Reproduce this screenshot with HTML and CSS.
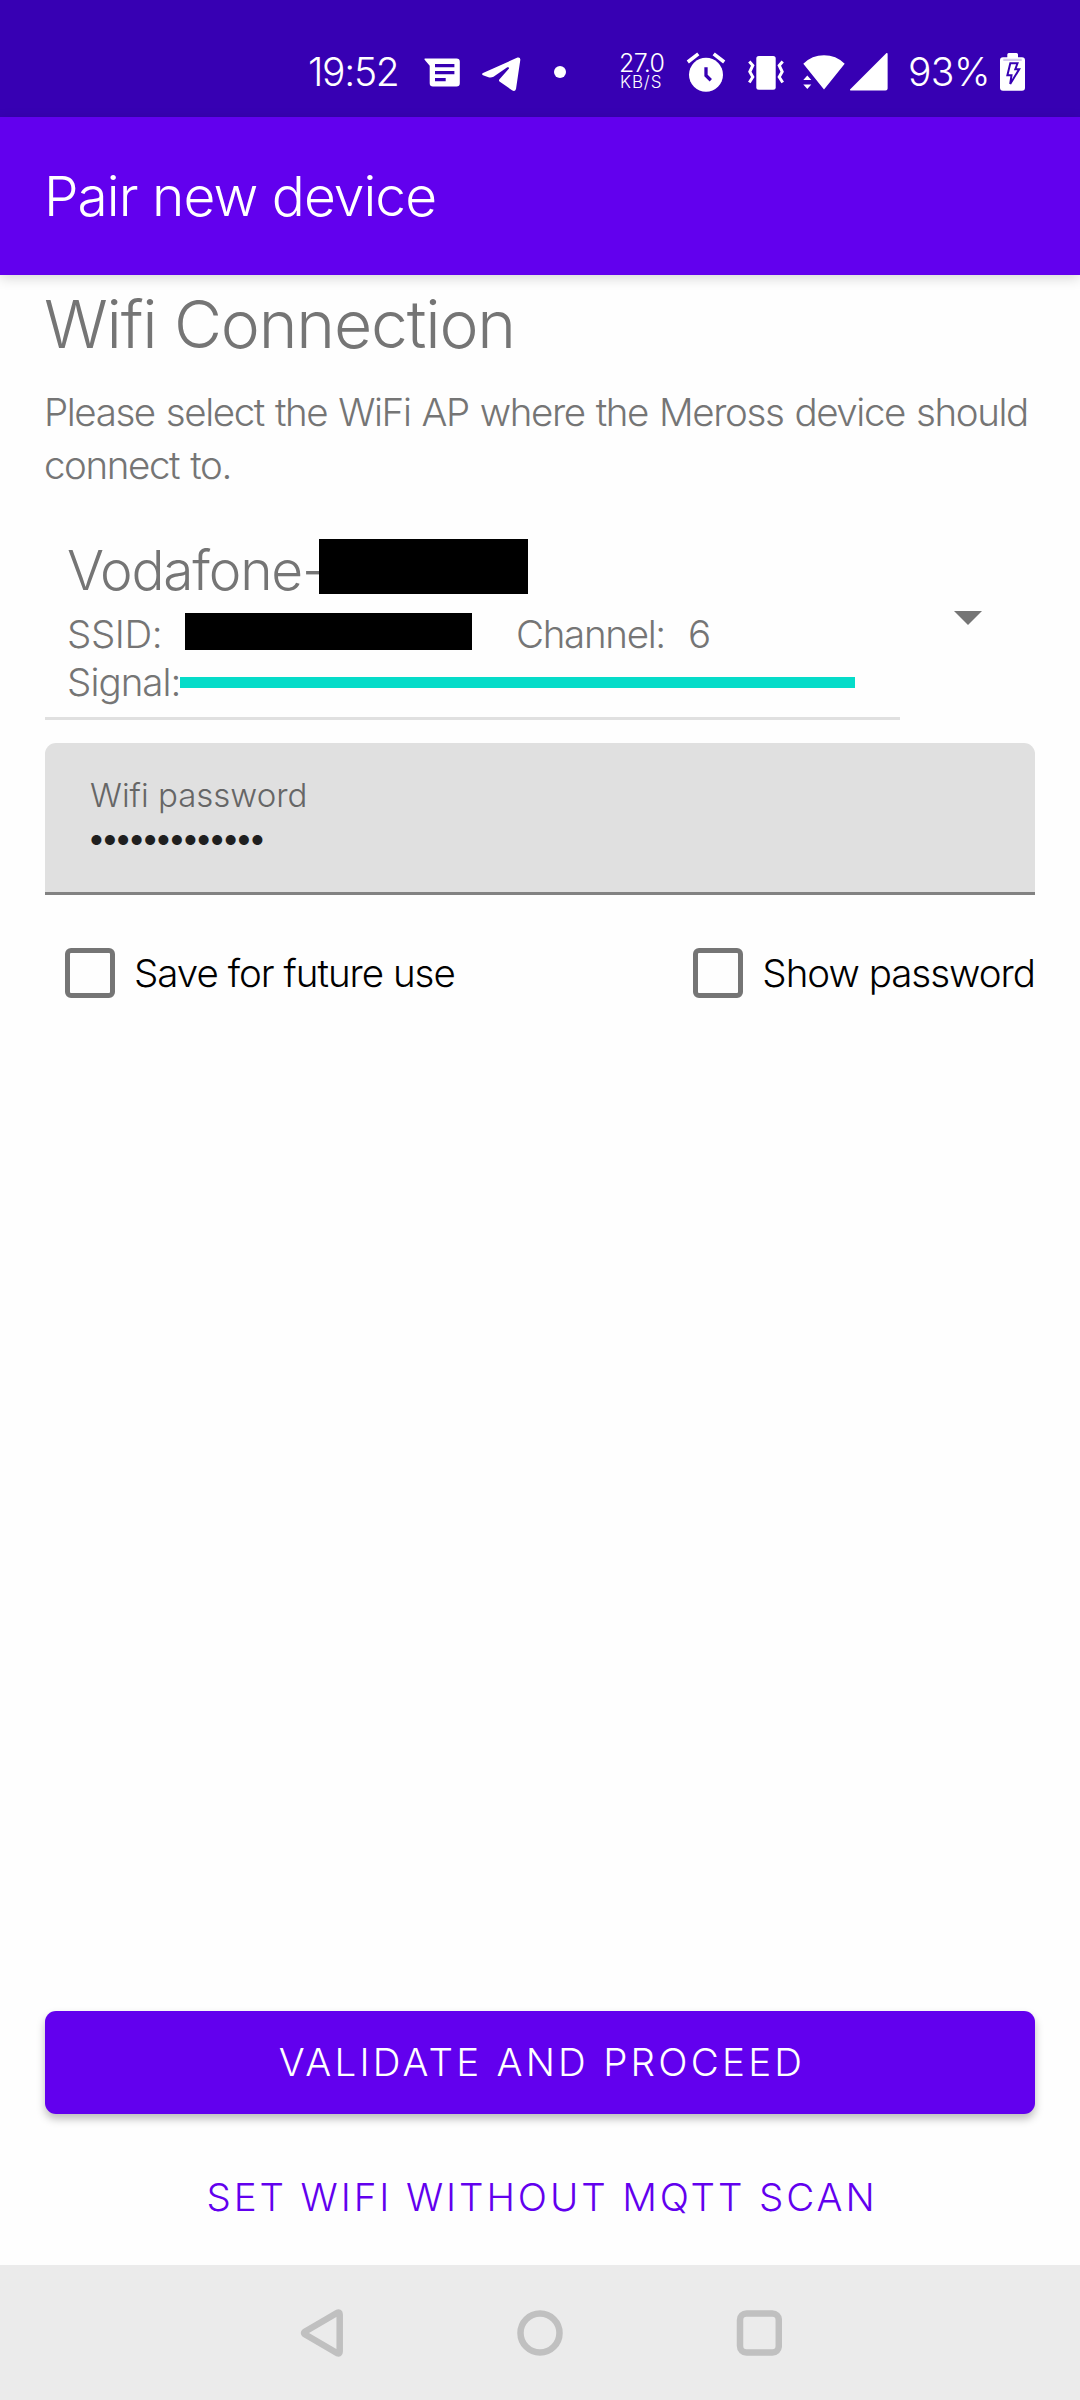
FILE: index.html
```html
<!DOCTYPE html>
<html lang="en">
<head>
    <meta charset="UTF-8">
    <meta name="viewport" content="width=device-width, initial-scale=1.0">
    <title>Pair new device</title>
    <link rel="stylesheet" href="styles.css">
</head>
<body>
    <div class="status-bar">
        <span class="clock">19:52</span>
        <svg class="icon icon-message" width="37" height="40" viewBox="0 0 37 40">
            <path fill="#fff" fill-rule="evenodd" d="M.8 6.5H32.5Q35.8 6.5 35.8 9.8V31.3Q35.8 34.6 32.5 34.6H9Q5.7 34.6 5.7 31.3V13.8L.6 7.8Q.2 6.7.8 6.5zM11 12v3.2h19.4V12zM11 19v3.2h19.4V19zM11 26v3.2h10.7V26z"/>
        </svg>
        <svg class="icon icon-telegram" width="40" height="40" viewBox="0 0 40 40">
            <path fill="#fff" d="M2 21L36.5 5.6Q39.6 5 39.3 8L35 37Q34 40 31 38.2L18.5 29.5Q17.5 28.5 18.5 27.3L28 16.5Q28.3 14.8 26.3 15.3L12.5 24.7Q10 26 7.5 25.2L2 23.3Q.2 22.2 2 21z"/>
        </svg>
        <span class="more-dot"></span>
        <div class="net-speed">
            <span class="speed-value">27.0</span>
            <span class="speed-unit">KB/S</span>
        </div>
        <svg class="icon icon-alarm" width="40" height="40" viewBox="0 0 40 40">
            <circle cx="20" cy="22.7" r="17" fill="#fff"/>
            <path d="M1.8 10L12.3 1.8M27.7 1.8L38.2 10" stroke="#fff" stroke-width="3.6" fill="none"/>
            <path d="M20 15.3V23.5L24.8 28.2" stroke="#3700b3" stroke-width="3.3" fill="none"/>
        </svg>
        <svg class="icon icon-vibrate" width="36" height="40" viewBox="0 0 36 40">
            <rect x="8.3" y="4" width="19.4" height="33.8" rx="2.5" fill="#fff"/>
            <path d="M1.3 9.5L4.8 13.5L1.8 19.8L4.8 25L1.3 30.5M34.7 9.5L31.2 13.5L34.2 19.8L31.2 25L34.7 30.5" stroke="#fff" stroke-width="3" fill="none"/>
        </svg>
        <svg class="icon icon-wifi" width="44" height="40" viewBox="0 0 44 40">
            <path fill="#fff" d="M1.3 11.7Q10 3.3 22 3.3T42.7 11.7L22 37.5zM1.3 28L5.3 23.6L9.3 28zM1.3 32.6h8L5.3 37z"/>
        </svg>
        <svg class="icon icon-signal" width="40" height="40" viewBox="0 0 40 40">
            <path fill="#fff" d="M37.5 1Q38.6.6 38.6 1.8V36.5Q38.6 38.6 36.5 38.6H1.8Q.6 38.6 1 37.5z"/>
        </svg>
        <span class="battery-level">93%</span>
        <svg class="icon icon-battery" width="25" height="40" viewBox="0 0 25 40">
            <path fill="#fff" d="M7.3 5.3V2.5Q7.3 1 8.8 1H16.5Q18 1 18 2.5V5.3H22Q25 5.3 25 8.3V35.7Q25 38.7 22 38.7H3Q0 38.7 0 35.7V8.3Q0 5.3 3 5.3z"/>
            <path fill="#d2c8ee" d="M3.3 6.7h18.4V9H3.3z"/>
            <path d="M10.3 11.3H17.5L15.3 17.2H19.2L10.2 32L11.5 23.3H7.4z" stroke="#3700b3" stroke-width="2" fill="none"/>
        </svg>
    </div>

    <div class="app-bar">Pair new device</div>

    <div class="content">
        <h1>Wifi Connection</h1>
        <p class="hint">Please select the WiFi AP where the Meross device should connect to.</p>

        <div class="spinner">
            <div class="network">
                <div class="network-name">
                    <span class="name-text">Vodafone-</span>
                    <span class="redacted redacted-name"></span>
                </div>
                <div class="network-row">
                    <span class="ssid-label">SSID:</span>
                    <span class="redacted redacted-ssid"></span>
                    <span class="channel-label">Channel:</span>
                    <span class="channel">6</span>
                </div>
                <div class="network-row">
                    <span class="signal-label">Signal:</span>
                    <div class="signal-bar"></div>
                </div>
            </div>
            <div class="spinner-toggle">
                <svg width="28" height="14" viewBox="0 0 28 14"><path fill="#757575" d="M0 0h28L14 14z"/></svg>
            </div>
        </div>

        <div class="field">
            <div class="field-label">Wifi password</div>
            <div class="field-value">•••••••••••••</div>
        </div>

        <div class="options">
            <label class="option"><span class="checkbox"></span><span class="option-text">Save for future use</span></label>
            <label class="option"><span class="checkbox"></span><span class="option-text">Show password</span></label>
        </div>

        <div class="actions">
            <button class="btn btn-primary">VALIDATE AND PROCEED</button>
            <button class="btn btn-text">SET WIFI WITHOUT MQTT SCAN</button>
        </div>
    </div>

    <div class="nav-bar">
        <svg width="44" height="48" viewBox="0 0 44 48"><path d="M4.8 22.7Q3.2 24 4.8 25.3L37.3 44.3Q39.7 45.2 39.7 42.6V5.4Q39.7 2.8 37.3 3.7z" fill="none" stroke="#c0c0c0" stroke-width="6.5" stroke-linejoin="round"/></svg>
        <svg width="46" height="48" viewBox="0 0 46 48"><circle cx="23" cy="24" r="19.5" fill="none" stroke="#c0c0c0" stroke-width="6.5"/></svg>
        <svg width="46" height="48" viewBox="0 0 46 48"><rect x="4" y="4.5" width="38.8" height="39" rx="6.5" fill="none" stroke="#c0c0c0" stroke-width="6.5"/></svg>
    </div>
</body>
</html>
```

FILE: styles.css
```css
* {
    box-sizing: border-box;
}
body {
    margin: 0;
    height: 2400px;
    display: flex;
    flex-direction: column;
    font-family: Inter, "Liberation Sans", sans-serif;
    font-weight: 300;
    font-size: 38.5px;
    color: #757575;
    background-color: #fefefe;
}
svg {
    display: block;
    flex-shrink: 0;
}
.status-bar {
    display: flex;
    align-items: center;
    height: 117px;
    padding: 27px 0 0 308px;
    background-color: #3700b3;
    color: #fff;
    white-space: nowrap;
}
.clock {
    width: 94px;
    margin-top: -2px;
    font-size: 39px;
    letter-spacing: -1.3px;
}
.icon-message {
    margin-left: 22px;
}
.icon-telegram {
    margin-left: 20px;
}
.more-dot {
    width: 12px;
    height: 12px;
    margin-left: 33px;
    border-radius: 50%;
    background-color: #fff;
}
.net-speed {
    display: flex;
    flex-direction: column;
    width: 46px;
    margin-left: 53px;
}
.speed-value {
    font-size: 25px;
    line-height: 19px;
    letter-spacing: -0.7px;
}
.speed-unit {
    padding-left: 1px;
    font-size: 17px;
    line-height: 18px;
    letter-spacing: 0.9px;
}
.icon-alarm {
    margin-left: 21px;
}
.icon-vibrate {
    margin-left: 22px;
}
.icon-wifi {
    margin-left: 18px;
}
.icon-signal {
    margin-left: 3px;
}
.battery-level {
    width: 83px;
    margin: -2px 0 0 19px;
    font-size: 39px;
    letter-spacing: -0.6px;
}
.icon-battery {
    margin-left: 9px;
}
.app-bar {
    height: 158px;
    padding-left: 44px;
    font-size: 55px;
    line-height: 158px;
    letter-spacing: -0.95px;
    color: #fff;
    background-color: #6200ee;
    box-shadow: 0 3px 12px rgba(0, 0, 0, 0.16);
}
.content {
    flex: 1;
    display: flex;
    flex-direction: column;
    padding: 9px 45px 0;
}
h1 {
    margin: 0 0 0 -1px;
    font-size: 66px;
    font-weight: 300;
    line-height: 80px;
    letter-spacing: -1.2px;
}
.hint {
    margin: 22px -10px 0 -1px;
    line-height: 53px;
    letter-spacing: -1.4px;
    word-spacing: 1.6px;
}
.spinner {
    display: flex;
    margin-top: 23px;
}
.network {
    width: 855px;
    padding: 22px 45px 11px 22px;
    border-bottom: 3px solid #e0e0e0;
}
.network-name {
    display: flex;
    height: 66px;
    margin-bottom: 7px;
    font-size: 55px;
    line-height: 66px;
    letter-spacing: -1.2px;
}
.name-text {
    width: 252px;
}
.redacted {
    background-color: #000;
}
.redacted-name {
    width: 209px;
    height: 55px;
    margin-top: 2px;
}
.network-row {
    display: flex;
    align-items: center;
    height: 48px;
    line-height: 48px;
}
.ssid-label {
    width: 118px;
    letter-spacing: -0.4px;
}
.redacted-ssid {
    width: 287px;
    height: 37px;
    margin-top: -5px;
}
.channel-label {
    width: 172px;
    margin-left: 44px;
    letter-spacing: -1.3px;
}
.signal-label {
    width: 113px;
    letter-spacing: -0.95px;
}
.signal-bar {
    flex: 1;
    height: 11px;
    background-color: #05dcc9;
}
.spinner-toggle {
    flex: 1;
    display: flex;
    align-items: center;
    justify-content: center;
}
.field {
    height: 152px;
    margin-top: 23px;
    padding: 30px 45px 0;
    background-color: #e0e0e0;
    border-bottom: 3px solid #828282;
    border-radius: 11px 11px 0 0;
}
.field-label {
    font-size: 33px;
    line-height: 44px;
    color: #666;
}
.field-value {
    margin-left: -4px;
    font-size: 37px;
    line-height: 42px;
    letter-spacing: -7.4px;
    color: #1f1f1f;
}
.options {
    display: flex;
    justify-content: space-between;
    height: 88px;
    margin-top: 34px;
    padding-left: 20px;
}
.option {
    display: flex;
    align-items: center;
    color: #000;
}
.checkbox {
    width: 50px;
    height: 50px;
    margin-right: 19px;
    border: 5px solid #757575;
    border-radius: 6px;
}
.option-text {
    letter-spacing: -1px;
}
.actions {
    display: flex;
    flex-direction: column;
    margin-top: auto;
    padding-bottom: 17px;
}
.btn {
    height: 103px;
    border: none;
    border-radius: 11px;
    font-family: inherit;
    font-size: 38.5px;
    font-weight: 300;
}
.btn-primary {
    padding: 0 0 2px 4px;
    color: #fff;
    letter-spacing: 3.25px;
    background-color: #6200ee;
    box-shadow: 0 5px 8px rgba(0, 0, 0, 0.26);
}
.btn-text {
    margin-top: 31px;
    padding: 0 0 0 4px;
    letter-spacing: 2.9px;
    color: #6200ee;
    background: none;
}
.nav-bar {
    display: flex;
    align-items: center;
    gap: 173px;
    height: 135px;
    padding-left: 300px;
    background-color: #ebebeb;
}
```
